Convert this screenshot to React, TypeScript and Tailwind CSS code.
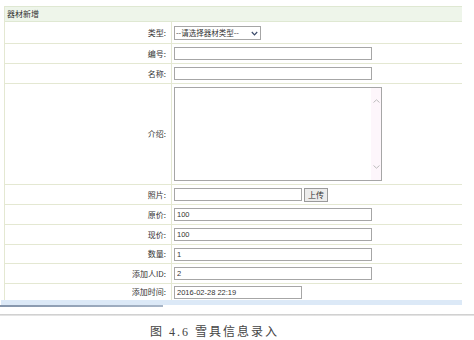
import React from 'react';

const label = "flex items-center justify-end w-[167px] shrink-0 border-r border-[#e4e8d2] pr-[5px] text-[8px] text-[#333]";
const row = "flex border-b border-[#e4e8d2]";
const input = "block h-[13px] border border-[#a6a6a6] bg-white px-[2px] text-[7.5px] text-[#333] outline-none font-['Liberation_Sans',sans-serif]";

const Row: React.FC<{ name: string; h: string; children: React.ReactNode; last?: boolean }> = ({ name, h, children, last }) => (
  <div className={`${last ? 'flex' : row} ${h}`}>
    <div className={label}>{name}</div>
    <div className="flex items-center pl-[2px]">{children}</div>
  </div>
);

const App: React.FC = () => {
  return (
    <div className="w-[474px] h-[340px] bg-white overflow-hidden font-['Noto_Sans_CJK_SC',sans-serif]">
      <div className="ml-[4px] mt-[6px] w-[458px] border-l border-[#e4e8d2]">
        <div className="h-[16px] border-t border-b border-[#dfe8d2] bg-[#eef5ea] pl-[2px] flex items-center text-[8px] text-[#333]">
          器材新增
        </div>
        <Row name="类型:" h="h-[22px]">
          <div className="relative flex">
            <select className="block appearance-none h-[14px] w-[87px] border border-[#a6a6a6] bg-white pl-[1px] text-[7.5px] leading-[12px] text-[#333] outline-none font-['Noto_Sans_CJK_SC',sans-serif]">
              <option>--请选择器材类型--</option>
            </select>
            <svg className="absolute right-[3px] top-[5px] pointer-events-none" width="7" height="5" viewBox="0 0 7 5">
              <path d="M0.8 1 L3.5 3.8 L6.2 1" fill="none" stroke="#3b4b6b" strokeWidth="1.2" />
            </svg>
          </div>
        </Row>
        <Row name="编号:" h="h-[20px]">
          <input className={`${input} w-[198px]`} />
        </Row>
        <Row name="名称:" h="h-[20px]">
          <input className={`${input} w-[198px]`} />
        </Row>
        <Row name="介绍:" h="h-[101px]">
          <div className="flex h-[94px] w-[208px] border border-[#a6a6a6] bg-white -mt-[1px]">
            <textarea className="flex-1 resize-none outline-none bg-white text-[7.5px]" />
            <div className="flex w-[10px] flex-col items-center justify-between bg-[#fdf6fb] py-[11px]">
              <svg width="7" height="4" viewBox="0 0 7 4">
                <path d="M0.5 3.5 L3.5 0.8 L6.5 3.5" fill="none" stroke="#bdbdbd" strokeWidth="1" />
              </svg>
              <svg width="7" height="4" viewBox="0 0 7 4">
                <path d="M0.5 0.5 L3.5 3.2 L6.5 0.5" fill="none" stroke="#bdbdbd" strokeWidth="1" />
              </svg>
            </div>
          </div>
        </Row>
        <Row name="照片:" h="h-[20px]">
          <input className={`${input} w-[128px]`} />
          <button className="ml-[2px] h-[14px] w-[24px] border border-[#9a9a9a] bg-[#ececec] text-[8px] leading-[12px] text-[#333]">
            上传
          </button>
        </Row>
        <Row name="原价:" h="h-[20px]">
          <input className={`${input} w-[198px]`} defaultValue="100" />
        </Row>
        <Row name="现价:" h="h-[20px]">
          <input className={`${input} w-[198px]`} defaultValue="100" />
        </Row>
        <Row name="数量:" h="h-[19px]">
          <input className={`${input} w-[198px]`} defaultValue="1" />
        </Row>
        <Row name="添加人ID:" h="h-[20px]">
          <input className={`${input} w-[198px]`} defaultValue="2" />
        </Row>
        <Row name="添加时间:" h="h-[16px]" last>
          <input className={`${input} w-[128px]`} defaultValue="2016-02-28 22:19" />
        </Row>
      </div>
      <div className="ml-[1px] w-[461px] h-[5px] bg-[#dce9f7]" />
      <div className="w-[163px] h-[2px] bg-gradient-to-r from-[#8595ab] to-[#a8b6c8]" />
      <div className="mt-[7px] h-[2px] w-full bg-gradient-to-b from-[#c8c8c8] to-[#ececec]" />
      <div className="mt-[10px] pl-[150px] text-[12px] leading-[13px] tracking-[2px] text-[#444] font-['Liberation_Serif','Noto_Sans_CJK_SC',serif]">
        图 4.6 雪具信息录入
      </div>
    </div>
  );
};

export default App;
